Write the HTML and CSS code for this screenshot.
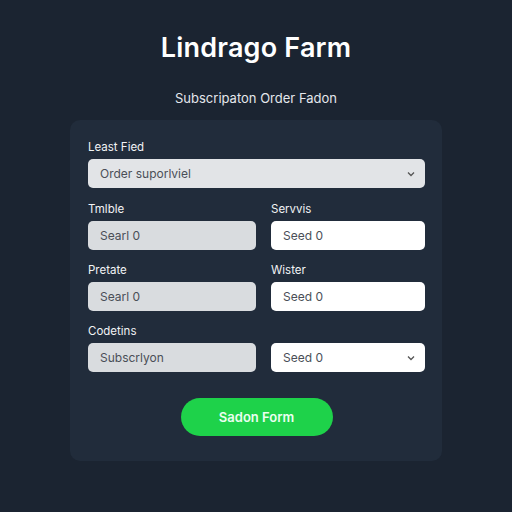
FILE: index.html
```html
<!DOCTYPE html>
<html>
<head>
<meta charset="utf-8">
<link rel="stylesheet" href="styles.css">
</head>
<body>
<div class="page">
  <h1 class="title">Lindrago Farm</h1>
  <p class="subtitle">Subscripaton Order Fadon</p>
  <form class="card">
    <div class="field full">
      <label class="label">Least Fied</label>
      <div class="control select light">Order suporlviel<span class="chev"><svg width="8" height="6" viewBox="0 0 8 6"><path d="M1 1.5 L4 4.5 L7 1.5" fill="none" stroke="#555" stroke-width="1.3"/></svg></span></div>
    </div>
    <div class="grid">
      <div class="field">
        <label class="label">Tmlble</label>
        <div class="control grey">Searl 0</div>
      </div>
      <div class="field">
        <label class="label">Servvis</label>
        <div class="control white">Seed 0</div>
      </div>
      <div class="field">
        <label class="label">Pretate</label>
        <div class="control grey">Searl 0</div>
      </div>
      <div class="field">
        <label class="label">Wister</label>
        <div class="control white">Seed 0</div>
      </div>
      <div class="field">
        <label class="label">Codetins</label>
        <div class="control grey">Subscrlyon</div>
      </div>
      <div class="field">
        <label class="label">&nbsp;</label>
        <div class="control select white">Seed 0<span class="chev"><svg width="8" height="6" viewBox="0 0 8 6"><path d="M1 1.5 L4 4.5 L7 1.5" fill="none" stroke="#555" stroke-width="1.3"/></svg></span></div>
      </div>
    </div>
    <div class="actions">
      <button type="button" class="btn">Sadon Form</button>
    </div>
  </form>
</div>
</body>
</html>
```
FILE: styles.css
```css
html, body {
  margin: 0;
  padding: 0;
  background: #1b2431;
  font-family: "Inter", "Liberation Sans", sans-serif;
}
.page {
  width: 512px;
  height: 512px;
  display: flex;
  flex-direction: column;
  align-items: center;
}
.title {
  margin: 32px 0 0;
  font-size: 27px;
  line-height: 32px;
  font-weight: 600;
  color: #ffffff;
  letter-spacing: 0.2px;
}
.subtitle {
  margin: 25px 0 0;
  font-size: 13px;
  line-height: 18px;
  color: #e4e7ec;
}
.card {
  margin-top: 13px;
  width: 372px;
  height: 341px;
  box-sizing: border-box;
  padding: 21px 17px 25px 18px;
  background: #212c3b;
  border-radius: 10px;
  display: flex;
  flex-direction: column;
}
.field {
  display: flex;
  flex-direction: column;
}
.label {
  font-size: 11.5px;
  line-height: 12px;
  color: #f1f3f5;
  margin-bottom: 6px;
}
.control {
  height: 29px;
  border-radius: 5px;
  box-sizing: border-box;
  padding: 0 12px;
  display: flex;
  align-items: center;
  font-size: 12px;
  color: #4a4f57;
}
.grey {
  background: #d9dcdf;
}
.light {
  background: #e2e4e7;
}
.white {
  background: #ffffff;
}
.select {
  justify-content: space-between;
}
.chev {
  display: flex;
  align-items: center;
  margin-right: -2px;
}
.grid {
  margin-top: 15px;
  display: grid;
  grid-template-columns: 168px 154px;
  column-gap: 15px;
  row-gap: 14px;
}
.actions {
  margin-top: 26px;
  display: flex;
  justify-content: center;
}
.btn {
  width: 152px;
  height: 38px;
  border: none;
  border-radius: 19px;
  background: #1ed24a;
  color: #eafff0;
  font-family: "Inter", "Liberation Sans", sans-serif;
  font-size: 13px;
  font-weight: 600;
}
```
